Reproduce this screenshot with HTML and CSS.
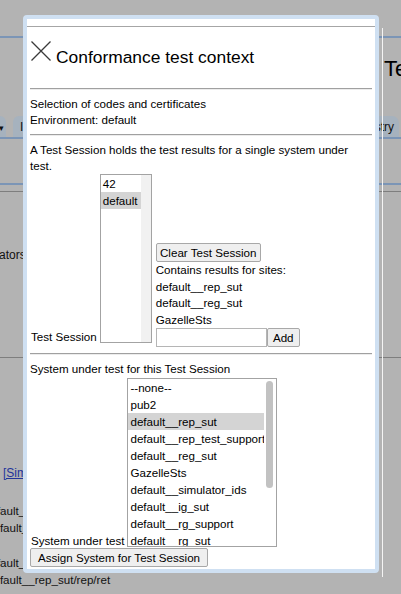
FILE: index.html
```html
<!DOCTYPE html>
<html>
<head>
<meta charset="utf-8">
<link rel="stylesheet" href="styles.css">
</head>
<body>
<div class="page">
  <div class="topband"></div>
  <div class="titlerow">Test Tools</div>
  <div class="tabs">
    <div class="tab tab-a"><span class="caret">▾</span></div>
    <div class="tab tab-b">Info</div>
    <div class="tab-spacer"></div>
    <div class="tab tab-c">Registry</div>
  </div>
  <div class="band2"></div>
  <div class="bg-line bg-ators">Simulators</div>
  <div class="bg-rule"></div>
  <div class="bg-line bg-link"><a href="#">[Simulators]</a></div>
  <div class="bg-line bg-def1">default__rep_sut</div>
  <div class="bg-line bg-def2">default__reg_sut</div>
  <div class="bg-line bg-def3">default__rep_sut</div>
  <div class="bg-line bg-def4">default__rep_sut/rep/ret</div>
</div>

<div class="glass-line"></div>
<div class="dialog">
  <div class="dlg-top"></div>
  <div class="dlg-body">
    <div class="head">
      <svg class="close" width="20" height="20" viewBox="0 0 20 20"><path d="M0.5 0.5 L19.5 19.5 M19.5 0.5 L0.5 19.5" stroke="#3a3a3a" stroke-width="1.3" fill="none"/></svg>
      <div class="title">Conformance test context</div>
    </div>
    <div class="rule"></div>
    <div class="sec">
      <div class="txt">Selection of codes and certificates</div>
      <div class="txt">Environment: default</div>
    </div>
    <div class="rule"></div>
    <div class="sec">
      <div class="txt">A Test Session holds the test results for a single system under test.</div>
      <div class="row">
        <div class="lbl lbl-ts">Test Session</div>
        <div class="listbox lb-small">
          <div class="opts">
            <div class="opt">42</div>
            <div class="opt sel">default</div>
          </div>
          <div class="sb sb-track"></div>
        </div>
        <div class="cell">
          <div class="btn btn-clear">Clear Test Session</div>
          <div class="site">Contains results for sites:</div>
          <div class="site">default__rep_sut</div>
          <div class="site">default__reg_sut</div>
          <div class="site">GazelleSts</div>
          <div class="addrow">
            <div class="input"></div>
            <div class="btn btn-add">Add</div>
          </div>
        </div>
      </div>
    </div>
    <div class="rule"></div>
    <div class="sec sec-last">
      <div class="txt">System under test for this Test Session</div>
      <div class="row row-sut">
        <div class="lbl lbl-sut">System under test</div>
        <div class="listbox lb-big">
          <div class="opts">
            <div class="opt">--none--</div>
            <div class="opt">pub2</div>
            <div class="opt sel">default__rep_sut</div>
            <div class="opt">default__rep_test_support</div>
            <div class="opt">default__reg_sut</div>
            <div class="opt">GazelleSts</div>
            <div class="opt">default__simulator_ids</div>
            <div class="opt">default__ig_sut</div>
            <div class="opt">default__rg_support</div>
            <div class="opt">default__rg_sut</div>
            <div class="opt">default__rep_sut2</div>
          </div>
          <div class="sb sb-overlay"><div class="thumb"></div></div>
        </div>
      </div>
      <div class="btn btn-assign">Assign System for Test Session</div>
    </div>
  </div>
</div>
</body>
</html>
```
FILE: styles.css
```css
html, body {
  margin: 0;
  padding: 0;
}
body {
  width: 401px;
  height: 594px;
  overflow: hidden;
  position: relative;
  background: #b3b3b3;
  font-family: "Liberation Sans", Arial, sans-serif;
  font-size: 11.6px;
  color: #000;
}

/* ---------- background page (behind modal glass) ---------- */
.page {
  width: 401px;
  height: 594px;
  overflow: hidden;
  color: #111;
}
.topband {
  height: 36px;
  border-bottom: 2px solid #7b95b6;
}
.titlerow {
  box-sizing: border-box;
  height: 77px;
  padding: 18px 0 0 384px;
  font-size: 22px;
  line-height: 26px;
  white-space: nowrap;
  color: #000;
}
.tabs {
  display: flex;
  align-items: flex-end;
  height: 22px;
  border-bottom: 2px solid #7b95b6;
}
.tab {
  height: 21px;
  background: #a6b2be;
  border-radius: 6px 6px 0 0;
  line-height: 22px;
  white-space: nowrap;
  overflow: hidden;
  font-size: 12px;
  color: #111;
}
.tab-a {
  width: 6px;
  border-radius: 0 6px 0 0;
}
.caret {
  font-size: 9px;
  display: inline-block;
  margin-left: -1px;
}
.tab-b {
  margin-left: 7px;
  width: 60px;
  padding-left: 7px;
}
.tab-spacer {
  flex: 1;
}
.tab-c {
  width: 70px;
  margin-right: 2px;
  text-align: right;
  padding-right: 5px;
  box-sizing: border-box;
  border-radius: 6px 7px 0 0;
}
.band2 {
  margin-top: 44px;
  height: 6px;
  border-top: 2px solid #7b95b6;
  border-bottom: 1px solid #7e7e7e;
}
.bg-line {
  height: 17px;
  line-height: 17px;
  white-space: nowrap;
  font-size: 11.6px;
}
.bg-ators {
  margin-top: 55px;
  margin-left: -31px;
  font-size: 12px;
}
.bg-rule {
  margin-top: 93px;
  height: 0;
  border-top: 1px solid #7e7e7e;
}
.bg-link {
  margin-top: 107px;
  margin-left: 3px;
  font-size: 12px;
}
.bg-link a {
  color: #23349b;
}
.bg-def1 {
  margin-top: 20px;
  margin-left: -16px;
}
.bg-def2 {
  margin-left: -13px;
}
.bg-def3 {
  margin-top: 18px;
  margin-left: -16px;
}
.bg-def4 {
  margin-left: -13px;
}

/* ---------- modal dialog ---------- */
.glass-line {
  position: absolute;
  left: 382px;
  top: 28px;
  width: 1px;
  height: 549px;
  background: #f4f4f4;
}
.dialog {
  position: absolute;
  left: 23px;
  top: 15px;
  width: 348px;
  height: 550px;
  border: 4px solid #cfe0f2;
  border-radius: 4px;
  background: #fff;
  overflow: hidden;
}
.dlg-top {
  height: 7px;
  border-bottom: 1px solid #a6a6a6;
}
.dlg-body {
  padding: 0 3px;
}
.head {
  box-sizing: border-box;
  height: 61px;
  padding: 14px 0 0 1px;
  display: flex;
  align-items: flex-start;
  gap: 5px;
}
.close {
  display: block;
  flex: none;
}
.title {
  margin-top: 6px;
  font-size: 17.4px;
  line-height: 20px;
  white-space: nowrap;
}
.rule {
  height: 0;
  border-top: 1px solid #a0a0a0;
  border-bottom: 1px solid #ececec;
}
.sec {
  padding: 6px 0;
}
.txt {
  line-height: 16px;
}
.row {
  display: flex;
  align-items: flex-end;
  gap: 3px;
}
.lbl {
  line-height: 13px;
  padding-left: 1px;
  white-space: nowrap;
}
.lbl-ts {
  margin-bottom: 4px;
}
.listbox {
  box-sizing: border-box;
  height: 169px;
  border: 1px solid #a3a3a3;
  background: #fff;
  display: flex;
  overflow: hidden;
  flex: none;
}
.lb-small {
  width: 52px;
  margin-bottom: 4px;
}
.lb-big {
  width: 150px;
}
.opts {
  flex: 1;
  min-width: 0;
  overflow: hidden;
}
.opt {
  height: 17px;
  line-height: 17px;
  padding-left: 2px;
  white-space: nowrap;
}
.opt.sel {
  background: #d4d4d4;
}
.sb {
  flex: none;
}
.sb-track {
  width: 10px;
  background: #f1f1f1;
}
.sb-overlay {
  width: 12px;
  box-sizing: border-box;
  padding: 2px 0 0 2px;
}
.thumb {
  width: 7px;
  height: 107px;
  border-radius: 4px;
  background: #c2c2c2;
}
.cell {
  margin-left: 1px;
  display: flex;
  flex-direction: column;
  align-items: flex-start;
}
.btn {
  box-sizing: border-box;
  height: 19px;
  line-height: 17px;
  padding: 0 6px;
  border: 1px solid #a8a8a8;
  border-radius: 2px;
  background: #efefef;
  white-space: nowrap;
}
.btn-clear {
  width: 105px;
  padding: 0;
  text-align: center;
}
.site {
  line-height: 16.5px;
}
.addrow {
  display: flex;
}
.input {
  box-sizing: border-box;
  width: 111px;
  height: 19px;
  border: 1px solid #b5b5b5;
  background: #fff;
}
.btn-add {
  width: 33px;
  padding: 0;
  text-align: center;
}
.row-sut {
  margin-top: 1px;
}
.lbl-sut {
  margin-bottom: 0;
}
.btn-assign {
  display: inline-block;
  margin-top: 1px;
  width: 178px;
  padding: 0;
  text-align: center;
}
```
